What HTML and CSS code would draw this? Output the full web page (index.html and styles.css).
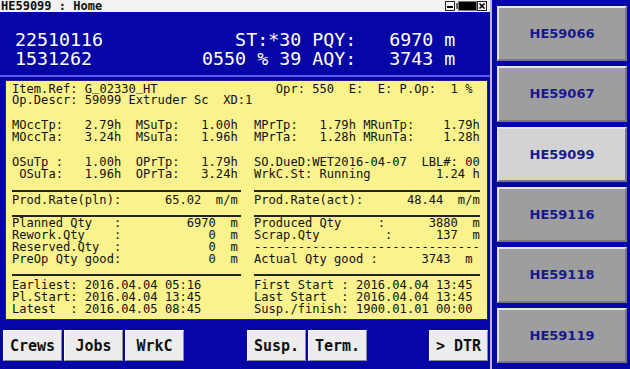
FILE: index.html
```html
<!DOCTYPE html>
<html lang="en">
  <head>
    <meta charset="UTF-8" />
    <title>HE59099 : Home</title>
    <link rel="stylesheet" href="styles.css">
  </head>
  <body>
    <div class="screen">
      <div class="window">
        <div class="titlebar">
          <span class="title">HE59099 : Home</span>
          <svg class="controls" width="44" height="10" viewBox="0 0 44 10">
            <rect x="0.5" y="0.5" width="9" height="9" fill="#f4f4f4" stroke="#222" />
            <rect x="2" y="5" width="6" height="2" fill="#000" />
            <rect x="11" y="2" width="2" height="6" fill="#666" />
            <rect x="13.5" y="0.5" width="18" height="9" fill="#000" stroke="#777" />
            <rect x="32.5" y="0.5" width="9" height="9" fill="#f4f4f4" stroke="#222" />
            <path d="M34.5 2.5 L39.5 7.5 M39.5 2.5 L34.5 7.5" stroke="#000" stroke-width="1.6" />
          </svg>
        </div>

        <header class="header">
<pre>22510116            ST:*30 PQY:   6970 m
1531262          0550 % 39 AQY:   3743 m</pre>
        </header>

        <main class="sheet">
          <section class="cols item">
            <pre>Item.Ref: G<span class="low">_</span>02330<span class="low">_</span>HT</pre>
            <pre>   Opr: 550  E:  E: P.Op:  1 %</pre>
            <pre class="wide">Op.Descr: 59099 Extruder Sc  XD:1</pre>
          </section>

          <section class="cols times">
<pre>MOccTp:   2.79h  MSuTp:   1.00h
MOccTa:   3.24h  MSuTa:   1.96h</pre>
<pre>MPrTp:   1.79h MRunTp:    1.79h
MPrTa:   1.28h MRunTa:    1.28h</pre>
          </section>

          <section class="cols ops">
<pre>OSuTp :   1.00h  OPrTp:   1.79h
 OSuTa:   1.96h  OPrTa:   3.24h</pre>
<pre>SO.DueD:WET2016-04-07  LBL#: 00
WrkC.St: Running         1.24 h</pre>
          </section>

          <section class="cols ruled rate">
<pre>Prod.Rate(pln):      65.02  m/m</pre>
<pre>Prod.Rate(act):      48.44  m/m</pre>
          </section>

          <section class="cols ruled qty">
<pre>Planned Qty   :         6970  m
Rework.Qty    :            0  m
Reserved.Qty  :            0  m
PreOp Qty good:            0  m</pre>
<pre>Produced Qty     :      3880  m
Scrap.Qty         :      137  m
-------------------------------
Actual Qty good :      3743  m</pre>
          </section>

          <section class="cols ruled dates">
<pre>Earliest: 2016.04.04 05:16
Pl.Start: 2016.04.04 13:45
Latest  : 2016.04.05 08:45</pre>
<pre>First Start : 2016.04.04 13:45
Last Start  : 2016.04.04 13:45
Susp./finish: 1900.01.01 00:00</pre>
          </section>
        </main>

        <nav class="toolbar">
          <button class="key">Crews</button>
          <button class="key">Jobs</button>
          <button class="key">WrkC</button>
          <button class="key gap">Susp.</button>
          <button class="key">Term.</button>
          <button class="key last">&gt; DTR</button>
        </nav>
      </div>

      <aside class="side">
        <button class="machine">HE59066</button>
        <button class="machine">HE59067</button>
        <button class="machine active">HE59099</button>
        <button class="machine">HE59116</button>
        <button class="machine">HE59118</button>
        <button class="machine">HE59119</button>
      </aside>
    </div>
  </body>
</html>
```

FILE: styles.css
```css
body {
  margin: 0;
  width: 630px;
  height: 369px;
  overflow: hidden;
  background-color: #0606a6;
  font-family: "DejaVu Sans Mono", monospace;
}

pre {
  margin: 0;
  font-family: "DejaVu Sans Mono", monospace;
}

.screen {
  display: flex;
  height: 369px;
}

.window {
  width: 490px;
  display: flex;
  flex-direction: column;
  background-color: #0606a6;
  border-right: 2px solid #b8b8c8;
}

/* title bar */
.titlebar {
  height: 12px;
  background-color: #f2f2f2;
  display: flex;
  align-items: center;
  justify-content: space-between;
  padding-left: 1px;
}

.title {
  font-size: 12px;
  font-weight: bold;
  line-height: 12px;
  color: #111;
}

.controls {
  margin-right: 1px;
}

/* blue header */
.header {
  height: 45px;
  padding: 18px 0 0 15px;
  border-bottom: 2px solid #5a5aec;
}

.header pre {
  font-size: 18.3px;
  line-height: 19px;
  color: #fff;
}

/* yellow sheet */
.sheet {
  margin: 3px 2px 0 5px;
  background-color: #faf28c;
  border: 1px solid #20208a;
  padding: 3px 6px 4px 6px;
}

.sheet pre {
  font-size: 12.1px;
  line-height: 12px;
  color: #111;
  white-space: pre;
}

.cols {
  display: grid;
  grid-template-columns: 229px 226px;
  column-gap: 13px;
}

.cols .wide {
  grid-column: 1 / -1;
}

.item pre {
  line-height: 11px;
}

.low {
  line-height: 0;
  vertical-align: 2px;
}

.times {
  margin-top: 13px;
}

.ops {
  margin-top: 13px;
}

.ruled > pre {
  border-top: 2px solid #222;
}

.rate {
  margin-top: 10px;
}

.rate > pre {
  padding-top: 1.5px;
}

.qty {
  margin-top: 9px;
}

.qty > pre {
  padding-top: 0.5px;
}

.dates {
  margin-top: 9px;
}

.dates > pre {
  padding-top: 3px;
}

/* bottom keys */
.toolbar {
  display: flex;
  gap: 2px;
  padding: 10px 2px 0 3px;
}

.key {
  width: 59px;
  height: 31px;
  padding: 0;
  font-family: "DejaVu Sans Mono", monospace;
  font-size: 15px;
  font-weight: bold;
  color: #111;
  background-color: #ececec;
  border: 1px solid;
  border-color: #fafafa #8a8a9a #8a8a9a #fafafa;
}

.key.gap {
  margin-left: 61px;
}

.key.last {
  margin-left: auto;
}

/* machine list */
.side {
  flex: 1;
  display: flex;
  flex-direction: column;
  gap: 5px;
  padding: 6px 3px 6px 5px;
}

.machine {
  flex: 1;
  padding: 0;
  font-family: "DejaVu Sans", sans-serif;
  font-size: 13px;
  font-weight: bold;
  color: #18188e;
  background-color: #9e9e9e;
  border: 2px solid;
  border-color: #e6e6e6 #7a7a7a #7a7a7a #e6e6e6;
}

.machine.active {
  background-color: #d3d3d3;
}
```
